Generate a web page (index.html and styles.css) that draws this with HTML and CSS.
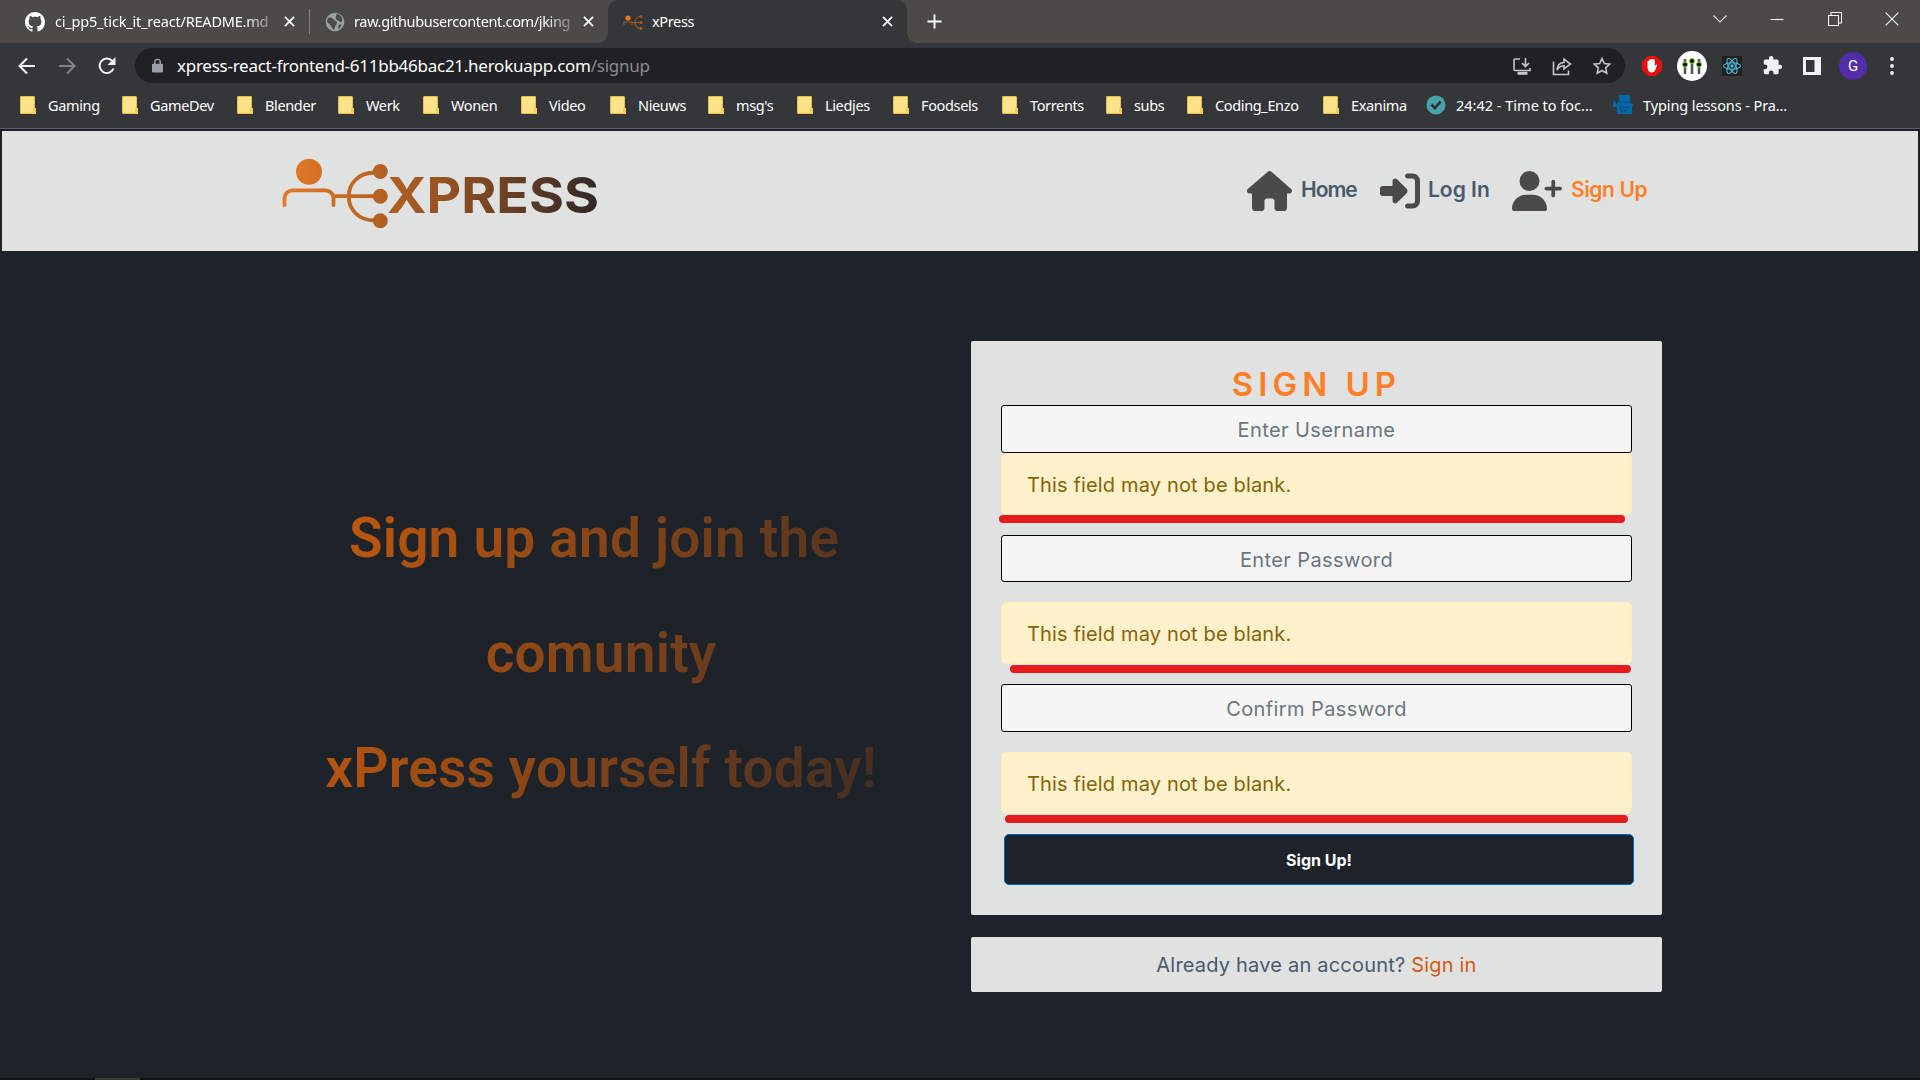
FILE: index.html
```html
<!DOCTYPE html>
<html lang="en">
<head>
<meta charset="utf-8">
<title>xPress</title>
<link rel="stylesheet" href="styles.css">
</head>
<body>
<div class="browser">
  <div class="tabs">
    <div class="tab tab-first">
      <svg class="fav" viewBox="0 0 16 16"><path fill="#fff" d="M8 0C3.58 0 0 3.58 0 8c0 3.54 2.29 6.53 5.47 7.59.4.07.55-.17.55-.38 0-.19-.01-.82-.01-1.49-2.01.37-2.53-.49-2.69-.94-.09-.23-.48-.94-.82-1.13-.28-.15-.68-.52-.01-.53.63-.01 1.08.58 1.23.82.72 1.21 1.87.87 2.33.66.07-.52.28-.87.51-1.07-1.78-.2-3.64-.89-3.64-3.95 0-.87.31-1.59.82-2.15-.08-.2-.36-1.02.08-2.12 0 0 .67-.21 2.2.82.64-.18 1.32-.27 2-.27s1.36.09 2 .27c1.53-1.04 2.2-.82 2.2-.82.44 1.1.16 1.92.08 2.12.51.56.82 1.27.82 2.15 0 3.07-1.87 3.75-3.65 3.95.29.25.54.73.54 1.48 0 1.07-.01 1.93-.01 2.2 0 .21.15.46.55.38A8.01 8.01 0 0 0 16 8c0-4.42-3.58-8-8-8z"/></svg>
      <span class="tab-title title-readme fade">ci_pp5_tick_it_react/README.md</span>
      <svg class="x" viewBox="0 0 12 12"><path d="M1 1l10 10M11 1L1 11"/></svg>
    </div>
    <i class="tab-sep"></i>
    <div class="tab tab-second">
      <svg class="fav" viewBox="0 0 20 20"><circle cx="10" cy="10" r="9.3" fill="#9aa0a6"/><path fill="#4b4a48" d="M3 6c3-1 5 0 6 2 1 1 3 1 3 3s-2 2-2 4l-1 3c-2-1-2-3-3-4-1-2-4-3-4-5zM11 2c3 0 5 2 6 4 1 3-1 5-2 4-1-2-3-1-4-3s1-3 0-5zM14 13c2-1 3 0 2 1l-2 3c-1-1-1-3 0-4z"/></svg>
      <span class="tab-title fade">raw.githubusercontent.com/jking</span>
      <svg class="x" viewBox="0 0 12 12"><path d="M1 1l10 10M11 1L1 11"/></svg>
    </div>
    <div class="tab tab-active">
      <svg class="fav" viewBox="0 0 20 20"><g fill="none" stroke="#a8571f" stroke-width="1.1"><path d="M1 13v-3h8v3M9 10.500h9M18 4.500c-8 0-8 12 0 12"/></g><circle cx="5" cy="6" r="2.600" fill="#e8761f"/><g fill="#a8591f"><circle cx="18" cy="4.500" r="1.500"/><circle cx="18" cy="10.500" r="1.500"/><circle cx="18" cy="16.500" r="1.500"/></g></svg>
      <span class="tab-title">xPress</span>
      <svg class="x" viewBox="0 0 12 12"><path d="M1 1l10 10M11 1L1 11"/></svg>
    </div>
    <svg class="plus" viewBox="0 0 16 16"><path d="M8 .5v15M.5 8h15"/></svg>
    <div class="win">
      <svg viewBox="0 0 14 14"><path d="M.5 3.500L7 10l6.500-6.500"/></svg>
      <svg viewBox="0 0 14 14"><path d="M.5 7.500h13"/></svg>
      <svg viewBox="0 0 14 14"><path d="M.5 3.500h10v10h-10zM3 3V.5h10.500v10.500H11"/></svg>
      <svg viewBox="0 0 14 14"><path d="M.7.7l12.600 12.600M13.300.7L.7 13.300"/></svg>
    </div>
  </div>
  <div class="toolbar">
    <div class="navbtns">
      <svg viewBox="0 0 18 18"><path d="M17 9H2M9 1.500L1.500 9 9 16.500"/></svg>
      <svg class="dim" viewBox="0 0 18 18"><path d="M1 9h15M9 1.500L16.500 9 9 16.500"/></svg>
      <svg viewBox="0 0 18 18"><path d="M15.500 11.500A7.200 7.200 0 1 1 14 3.800"/><path class="solid" d="M17.500 0v8h-8z"/></svg>
    </div>
    <div class="urlbar">
      <svg class="lock" viewBox="0 0 12 15"><path fill="#9aa0a6" d="M1 5.500h10a1 1 0 0 1 1 1V14a1 1 0 0 1-1 1H1a1 1 0 0 1-1-1V6.500a1 1 0 0 1 1-1z"/><path d="M3 6V3.800a3 3 0 0 1 6 0V6" fill="none" stroke="#9aa0a6" stroke-width="1.500"/></svg>
      <span class="url">xpress-react-frontend-611bb46bac21.herokuapp.com<span class="path">/signup</span></span>
      <div class="url-icons">
        <svg viewBox="0 0 20 20"><path d="M8 3H3a1 1 0 0 0-1 1v9.500a1 1 0 0 0 1 1h15V12M13.500 2v8M10 7l3.500 3.500L17 7"/><path d="M5.500 17.300h10" stroke-width="3"/></svg>
        <svg viewBox="0 0 20 20"><path d="M1.500 5.500v13h15v-4M5 14c.5-5 3-7.500 7-7.500V3l6.500 5-6.500 5V9.800c-3 0-5 1-7 4.200z"/></svg>
        <svg viewBox="0 0 20 20"><path d="M10 2.500l2.300 5 5.400.6-4 3.700 1.100 5.400-4.800-2.700-4.800 2.700 1.100-5.400-4-3.700 5.400-.6z"/></svg>
      </div>
    </div>
    <div class="exts">
      <svg class="e-block" viewBox="0 0 20 20"><path fill="#e60e0e" d="M6 0h8l6 6v8l-6 6H6l-6-6V6z"/><path fill="#fff" d="M5.500 11V5.500c0-1 1.600-1 1.700 0V4c0-1 1.700-1 1.800 0v-.5c0-1 1.900-1 1.900 0V4c.1-1 1.900-1 1.900 0v6c1-2 2.800-2 2.300-.8-1 2.600-1.900 7.300-5 7.300-3.100 0-4.600-2.500-4.600-5.500z"/></svg>
      <svg class="e-mix" viewBox="0 0 30 30"><circle cx="15" cy="15" r="15" fill="#fff"/><path d="M8 8v15M15 8v15M22 8v15" stroke="#555" stroke-width="2.600"/><g fill="#111" stroke="#7fd12c" stroke-width="1"><circle cx="8" cy="13.500" r="2.500"/><circle cx="15" cy="10" r="2.500"/><circle cx="22" cy="13.500" r="2.500"/></g></svg>
      <svg class="e-react" viewBox="0 0 20 20"><path fill="#202020" d="M0 0h20v20H0z"/><g fill="none" stroke="#53b9dd" stroke-width="1.100"><ellipse cx="10" cy="10" rx="8.500" ry="3.300"/><ellipse cx="10" cy="10" rx="8.500" ry="3.300" transform="rotate(60 10 10)"/><ellipse cx="10" cy="10" rx="8.500" ry="3.300" transform="rotate(120 10 10)"/></g><circle cx="10" cy="10" r="1.700" fill="#53b9dd"/></svg>
      <svg class="e-puz" viewBox="0 0 24 24"><path fill="#f1f3f4" d="M20.500 11H19V7c0-1.100-.9-2-2-2h-4V3.500a2.500 2.500 0 0 0-5 0V5H4c-1.100 0-2 .9-2 2v3.800h1.500a2.700 2.700 0 0 1 0 5.400H2V20c0 1.100.9 2 2 2h3.800v-1.500a2.700 2.700 0 0 1 5.400 0V22H17c1.100 0 2-.9 2-2v-4h1.500a2.500 2.500 0 0 0 0-5z"/></svg>
      <svg class="e-side" viewBox="0 0 18 18"><path fill="#f1f3f4" fill-rule="evenodd" d="M0 0h18v18H0zM3 3v12h8.500V3z"/></svg>
      <span class="avatar">G</span>
      <svg class="e-dots" viewBox="0 0 4 18"><g fill="#f1f3f4"><circle cx="2" cy="2" r="1.900"/><circle cx="2" cy="9" r="1.900"/><circle cx="2" cy="16" r="1.900"/></g></svg>
    </div>
  </div>
  <div class="bookmarks">
    <span class="bm"><i class="folder"></i><span>Gaming</span></span>
    <span class="bm"><i class="folder"></i><span>GameDev</span></span>
    <span class="bm"><i class="folder"></i><span>Blender</span></span>
    <span class="bm"><i class="folder"></i><span>Werk</span></span>
    <span class="bm"><i class="folder"></i><span>Wonen</span></span>
    <span class="bm"><i class="folder"></i><span>Video</span></span>
    <span class="bm"><i class="folder"></i><span>Nieuws</span></span>
    <span class="bm"><i class="folder"></i><span>msg's</span></span>
    <span class="bm"><i class="folder"></i><span>Liedjes</span></span>
    <span class="bm"><i class="folder"></i><span>Foodsels</span></span>
    <span class="bm"><i class="folder"></i><span>Torrents</span></span>
    <span class="bm"><i class="folder"></i><span>subs</span></span>
    <span class="bm"><i class="folder"></i><span>Coding_Enzo</span></span>
    <span class="bm"><i class="folder"></i><span>Exanima</span></span>
    <span class="bm bm-wide"><svg viewBox="0 0 20 20"><circle cx="10" cy="10" r="9.500" fill="#47a3a8"/><path d="M5.500 9.500l3.300 3.500 6-6.500" fill="none" stroke="#2d3436" stroke-width="2.600"/></svg><span>24:42 - Time to foc...</span></span>
    <span class="bm bm-wide bm-typing"><svg viewBox="0 0 20 20"><path fill="#0067a8" d="M6 0h11v7H6zM0 6.500h3V9h1V7.500h14V9h2v2h-1v8H4v-7H0z"/><path stroke="#23384a" stroke-width="1.600" stroke-dasharray="1.800 1.600" d="M6.500 12.500h10M8 15.500h7"/></svg><span>Typing lessons - Pra...</span></span>
  </div>
</div>
<div class="page">
  <header class="navbar">
    <svg class="logo" viewBox="0 0 320 74">
      <defs><linearGradient id="lg" gradientUnits="userSpaceOnUse" x1="2" y1="0" x2="318" y2="40"><stop offset="0" stop-color="#e87a27"/><stop offset=".5" stop-color="#985422"/><stop offset="1" stop-color="#2f2827"/></linearGradient></defs>
      <g fill="none" stroke="url(#lg)" stroke-width="3.800" stroke-linecap="round"><path d="M4.500 46V39a8 8 0 0 1 8-7.700h33a8 8 0 0 1 8 7.700v7M53.500 37.200H95M95 13.500c-35 0-35 48 0 48"/></g>
      <g fill="url(#lg)"><circle cx="29" cy="12.800" r="13"/><circle cx="100.300" cy="12.500" r="7.500"/><circle cx="100.300" cy="37.300" r="7.500"/><circle cx="100.300" cy="61.700" r="7.500"/>
      <text class="logo-text" x="107" y="54" textLength="212" lengthAdjust="spacingAndGlyphs">XPRESS</text></g>
    </svg>
    <nav class="links">
      <a class="link l1"><svg viewBox="0 0 576 512"><path d="M575.8 255.500c0 18-15 32.100-32 32.100h-32l.7 160.200c0 2.700-.2 5.400-.5 8.100V472c0 22.100-17.900 40-40 40H392c-22.100 0-40-17.900-40-40V384c0-17.700-14.300-32-32-32H256c-17.700 0-32 14.300-32 32v88c0 22.100-17.900 40-40 40H104c-22.100 0-40-17.900-40-40V287.600H32c-18 0-32-14-32-32.100c0-9 3-17 10-24L266.400 8c7-7 15-8 22-8s15 2 21 7L564.800 231.500c8 7 12 15 11 24z"/></svg><span>Home</span></a>
      <a class="link l2"><svg viewBox="0 0 512 512"><path d="M217.900 105.900L340.700 228.700c7.200 7.200 11.300 17.100 11.300 27.300s-4.100 20.100-11.300 27.300L217.900 406.100c-6.400 6.400-15 9.900-24 9.900c-18.700 0-33.900-15.200-33.900-33.900V320H32c-17.700 0-32-14.300-32-32v-64c0-17.700 14.300-32 32-32h128v-62.100c0-18.700 15.200-33.900 33.900-33.900c9 0 17.600 3.600 24 9.900zM352 416h64c17.700 0 32-14.300 32-32V128c0-17.700-14.300-32-32-32h-64c-17.700 0-32-14.300-32-32s14.300-32 32-32h64c53 0 96 43 96 96v256c0 53-43 96-96 96h-64c-17.700 0-32-14.300-32-32s14.300-32 32-32z"/></svg><span>Log In</span></a>
      <a class="link l3"><svg viewBox="0 0 640 512"><path d="M96 128a128 128 0 1 1 256 0A128 128 0 1 1 96 128zM0 482.300C0 383.800 79.800 304 178.300 304h91.400C368.200 304 448 383.800 448 482.300c0 16.400-13.300 29.700-29.700 29.700H29.700C13.300 512 0 498.700 0 482.300zM504 312V248H440c-13.300 0-24-10.700-24-24s10.700-24 24-24h64V136c0-13.300 10.700-24 24-24s24 10.700 24 24v64h64c13.300 0 24 10.700 24 24s-10.700 24-24 24H552v64c0 13.300-10.700 24-24 24s-24-10.700-24-24z"/></svg><span>Sign Up</span></a>
    </nav>
  </header>
  <main class="main">
    <h1 class="hero">Sign up and join the&nbsp;<br>comunity<br>xPress yourself today!</h1>
    <div class="right">
      <form class="card">
        <h2 class="title">SIGN UP</h2>
        <div class="input">Enter Username</div>
        <div class="alert a1">This field may not be blank.</div>
        <div class="input i2">Enter Password</div>
        <div class="alert a2">This field may not be blank.</div>
        <div class="input i3">Confirm Password</div>
        <div class="alert a3">This field may not be blank.</div>
        <div class="btn">Sign Up!</div>
      </form>
      <div class="card2">Already have an account? <span class="signin">Sign in</span></div>
    </div>
  </main>
  <div class="taskbar"><i></i></div>
</div>
</body>
</html>
```
FILE: styles.css
```css
* { box-sizing: border-box; }
body { margin: 0; width: 1920px; height: 1080px; overflow: hidden; background: #1e2229; font-family: Inter, "Liberation Sans", sans-serif; }
svg { display: block; flex: none; }
.browser { height: 129px; background: #35363a; border-bottom: 1px solid #5c5e63; color: #fff; font-family: "Noto Sans", "Open Sans", sans-serif; }
.tabs { height: 43px; background: #4b4a48; display: flex; align-items: center; }
.tab { height: 43px; display: flex; align-items: center; font-size: 14.5px; letter-spacing: -0.35px; }
.tab-first { width: 309px; padding-left: 25px; }
.tab-second { width: 298px; padding-left: 15px; }
.tab-active { width: 299px; padding-left: 15px; background: #35363a; border-radius: 10px 10px 0 0; position: relative; }
.tab-active::before, .tab-active::after { content: ""; position: absolute; bottom: 0; width: 10px; height: 10px; }
.tab-active::before { left: -10px; background: radial-gradient(circle at 0 0, transparent 9.5px, #35363a 10px); }
.tab-active::after { right: -10px; background: radial-gradient(circle at 100% 0, transparent 9.5px, #35363a 10px); }
.tab-sep { width: 1px; height: 25px; background: #85827d; }
.fav { width: 20px; height: 20px; margin-right: 9px; }
.tab-first .fav { margin-right: 10px; }
.tab-title { width: 218px; height: 24px; line-height: 22px; overflow: hidden; white-space: nowrap; }
.title-readme { letter-spacing: -0.2px; }
.fade { -webkit-mask-image: linear-gradient(90deg, #000 87%, rgba(0,0,0,.25)); mask-image: linear-gradient(90deg, #000 87%, rgba(0,0,0,.25)); }
.x { width: 11px; height: 11px; margin-left: auto; margin-right: 14px; fill: none; stroke: #fff; stroke-width: 1.9; }
.plus { width: 15px; height: 15px; margin-left: 20px; fill: none; stroke: #fff; stroke-width: 2; }
.win { display: flex; gap: 43.5px; margin-left: auto; margin-right: 21px; padding-bottom: 6px; }
.win svg { width: 14px; height: 14px; fill: none; stroke: #f5f5f5; stroke-width: 1.1; }
.toolbar { height: 45px; display: flex; align-items: center; }
.navbtns { width: 135px; padding-left: 18px; display: flex; gap: 22px; }
.navbtns svg { width: 18px; height: 18px; fill: none; stroke: #f1f3f4; stroke-width: 2; }
.navbtns .dim { stroke: #808286; }
.navbtns .solid { fill: #f1f3f4; stroke: none; }
.urlbar { width: 1490px; height: 35px; border-radius: 18px; background: #202124; display: flex; align-items: center; padding: 0 13px 0 17px; }
.lock { width: 11px; height: 15px; }
.url { margin-left: 14px; font-size: 17px; letter-spacing: -0.26px; white-space: nowrap; }
.path { color: #8b8d91; }
.url-icons { margin-left: auto; display: flex; gap: 20px; }
.url-icons svg { width: 20px; height: 20px; fill: none; stroke: #c4c6c9; stroke-width: 1.6; }
.exts { flex: 1; display: flex; align-items: center; padding-left: 17px; }
.e-block { width: 20px; height: 20px; }
.e-mix { width: 30px; height: 30px; margin-left: 15px; }
.e-react { width: 20px; height: 20px; margin-left: 15px; }
.e-puz { width: 21px; height: 21px; margin-left: 20px; }
.e-side { width: 18px; height: 18px; margin-left: 20px; }
.avatar { width: 28px; height: 28px; border-radius: 50%; margin-left: 18px; background: #512da8; font: 15px/28px Roboto, sans-serif; text-align: center; }
.e-dots { width: 4px; height: 18px; margin-left: 23px; }
.bookmarks { height: 34px; padding-left: 20px; display: grid; align-items: center; grid-template-columns: 102px 115px 101px 85px 98px 89px 98px 89px 96px 109px 104px 81px 136px 103px 187px 200px; font-size: 14.5px; letter-spacing: -0.36px; }
.bm { display: flex; align-items: center; white-space: nowrap; }
.bm svg { width: 20px; height: 20px; margin-right: 10px; }
.bm-wide { letter-spacing: 0; }
.bm-typing { letter-spacing: -0.1px; }
.folder { width: 15px; height: 18px; margin-right: 13px; background: #fee28a; border: 1px solid #e9c04a; border-radius: 1px; position: relative; }
.folder::after { content: ""; position: absolute; right: -2px; bottom: -1px; width: 3px; height: 6px; background: #f3cd55; }
.page { height: 951px; padding: 2px 2px 0; display: flex; flex-direction: column; }
.navbar { height: 120px; background: #e0e2e1; display: flex; align-items: flex-start; }
.logo { width: 320px; height: 74px; margin: 28px 0 0 278px; overflow: visible; }
.logo-text { font: 700 50px Inter, sans-serif; }
.links { display: flex; margin: 38px 0 0 647px; }
.link { display: flex; align-items: center; height: 44px; color: #4a5a6c; font-size: 21px; font-weight: 600; letter-spacing: -0.4px; white-space: nowrap; }
.link svg { fill: #4a4a4a; }
.link span { position: relative; top: -2px; }
.l1 { width: 133px; letter-spacing: -1px; }
.l1 svg { width: 45px; height: 40px; margin-right: 9px; }
.l2 { width: 132px; letter-spacing: 0; }
.l2 svg { width: 40px; height: 40px; margin-right: 8px; }
.l3 svg { width: 50px; height: 40px; margin-right: 9px; }
.l3 { color: #ff7f27; }
.main { flex: 1; display: flex; align-items: flex-start; }
.hero { width: 640px; margin: 230px 50px 0 279px; text-align: center; font: 600 55px/115px Roboto, sans-serif; letter-spacing: 0.2px; background: linear-gradient(105deg, #c55a0c 5%, #2a2628 109%); -webkit-background-clip: text; background-clip: text; color: transparent; }
.right { width: 691px; margin-top: 90px; }
.card { height: 574px; background: #e0e2e1; padding: 27px 30px 30px; border-radius: 2px; }
.title { margin: 0 0 5px; height: 32px; text-align: center; font-size: 33px; line-height: 32px; letter-spacing: 5px; font-weight: 600; color: #ff7f27; }
.input { height: 48px; border: 1px solid #000; border-radius: 3px; background: #f5f5f5; color: #6c757d; text-align: center; font-size: 20px; letter-spacing: 0.4px; line-height: 48px; }
.alert { position: relative; height: 62px; background: #fff1cc; border: 1px solid #ffeeba; border-radius: 5px; color: #856404; font-size: 20px; letter-spacing: 0.15px; line-height: 62px; padding-left: 25px; }
.alert::after { content: ""; position: absolute; height: 8px; top: 62px; border-radius: 4px; background: #e61b1b; }
.a1 { margin-bottom: 20px; }
.a1::after { left: -3px; width: 626px; top: 61px; }
.i2 { height: 47px; }
.a2, .a3 { margin: 20px 0; }
.a2::after { left: 8px; width: 621px; }
.a3::after { left: 3px; width: 623px; }
.btn { width: 630px; height: 51px; margin-left: 3px; background: #1e2229; border: 1px solid #0062cc; border-radius: 5px; color: #fff; text-align: center; font-size: 16px; font-weight: 700; line-height: 51px; }
.card2 { height: 55px; margin-top: 22px; background: #e0e2e1; color: #4a5a6c; text-align: center; font-size: 20px; letter-spacing: 0.2px; line-height: 56px; border-radius: 2px; }
.signin { color: #d8590f; }
.taskbar { height: 2px; margin: 0 -2px; background: #101114; padding-left: 95px; }
.taskbar i { display: block; width: 45px; height: 2px; background: #36383a; }
```
